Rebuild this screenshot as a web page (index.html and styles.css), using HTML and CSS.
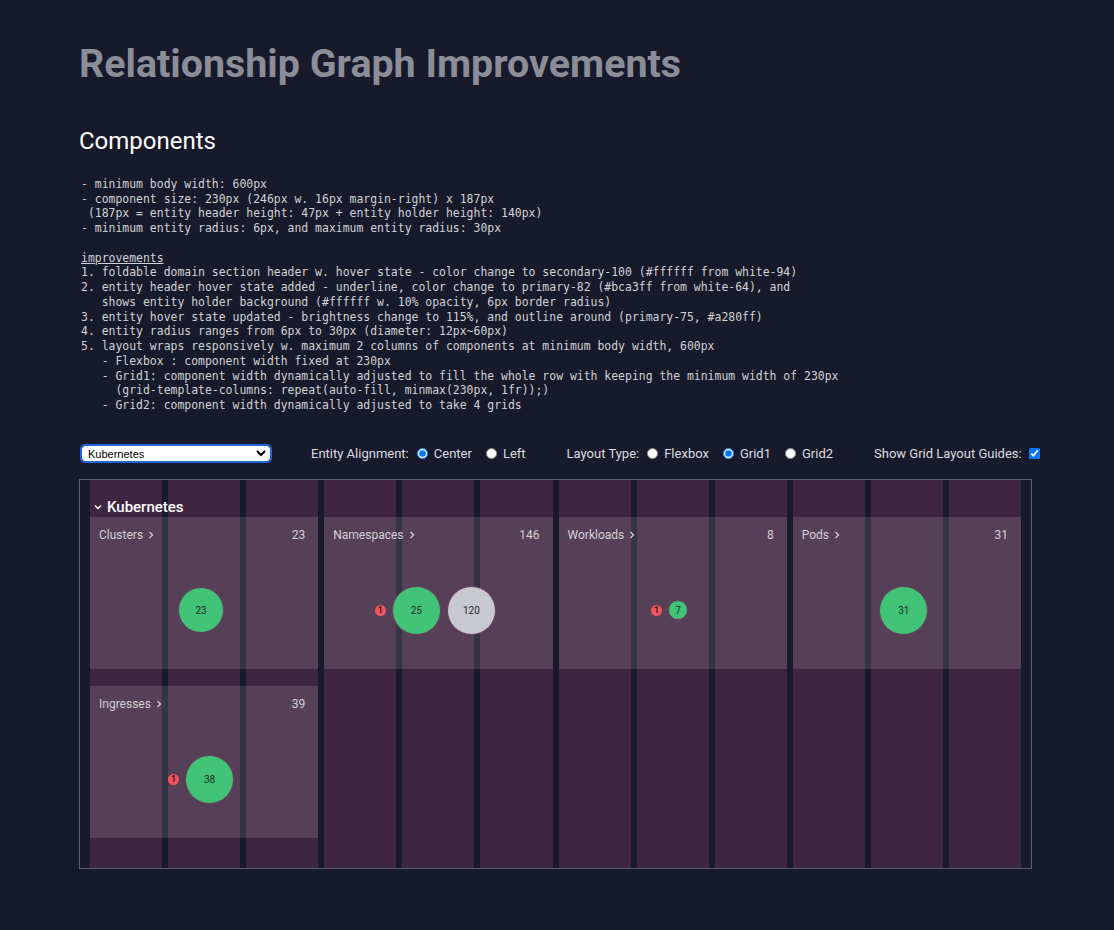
FILE: index.html
```html
<!DOCTYPE html>
<html lang="en">
<head>
<meta charset="utf-8">
<title>Relationship Graph Improvements</title>
<link rel="stylesheet" href="styles.css">
</head>
<body>
<h1 class="title">Relationship Graph Improvements</h1>
<h2 class="subtitle">Components</h2>
<pre class="notes">- minimum body width: 600px
- component size: 230px (246px w. 16px margin-right) x 187px
 (187px = entity header height: 47px + entity holder height: 140px)
- minimum entity radius: 6px, and maximum entity radius: 30px

<u>improvements</u>
1. foldable domain section header w. hover state - color change to secondary-100 (#ffffff from white-94)
2. entity header hover state added - underline, color change to primary-82 (#bca3ff from white-64), and
   shows entity holder background (#ffffff w. 10% opacity, 6px border radius)
3. entity hover state updated - brightness change to 115%, and outline around (primary-75, #a280ff)
4. entity radius ranges from 6px to 30px (diameter: 12px~60px)
5. layout wraps responsively w. maximum 2 columns of components at minimum body width, 600px
   - Flexbox : component width fixed at 230px
   - Grid1: component width dynamically adjusted to fill the whole row with keeping the minimum width of 230px
     (grid-template-columns: repeat(auto-fill, minmax(230px, 1fr));)
   - Grid2: component width dynamically adjusted to take 4 grids</pre>

<div class="controls">
  <select class="domain-select"><option>Kubernetes</option></select>
  <div class="ctrl">
    <span class="ctrl-label">Entity Alignment:</span>
    <label class="opt"><input type="radio" name="align" checked>Center</label>
    <label class="opt"><input type="radio" name="align">Left</label>
  </div>
  <div class="ctrl">
    <span class="ctrl-label">Layout Type:</span>
    <label class="opt"><input type="radio" name="layout">Flexbox</label>
    <label class="opt"><input type="radio" name="layout" checked>Grid1</label>
    <label class="opt"><input type="radio" name="layout">Grid2</label>
  </div>
  <div class="ctrl">
    <span class="ctrl-label">Show Grid Layout Guides:</span>
    <input class="check" type="checkbox" checked>
  </div>
</div>

<div class="graph">
  <div class="guides">
    <div class="guide"></div><div class="guide"></div><div class="guide"></div><div class="guide"></div>
    <div class="guide"></div><div class="guide"></div><div class="guide"></div><div class="guide"></div>
    <div class="guide"></div><div class="guide"></div><div class="guide"></div><div class="guide"></div>
  </div>
  <div class="domain">
    <div class="domain-header">
      <svg class="fold" width="8" height="6" viewBox="0 0 8 6"><path d="M1 1.5 L4 4.5 L7 1.5" fill="none" stroke="#ffffff" stroke-width="1.4"/></svg>
      <span>Kubernetes</span>
    </div>
    <div class="components">
      <div class="component">
        <div class="comp-header">
          <span class="comp-name">Clusters <svg class="chev" width="6" height="8" viewBox="0 0 6 8"><path d="M1.5 1 L4.5 4 L1.5 7" fill="none" stroke="#d7cfd8" stroke-width="1.3"/></svg></span>
          <span class="comp-count">23</span>
        </div>
        <div class="holder">
          <div class="entity"><div class="circle green" style="width:46px;height:46px">23</div></div>
        </div>
      </div>
      <div class="component">
        <div class="comp-header">
          <span class="comp-name">Namespaces <svg class="chev" width="6" height="8" viewBox="0 0 6 8"><path d="M1.5 1 L4.5 4 L1.5 7" fill="none" stroke="#d7cfd8" stroke-width="1.3"/></svg></span>
          <span class="comp-count">146</span>
        </div>
        <div class="holder">
          <div class="entity"><span class="badge">1</span><div class="circle green" style="width:49px;height:49px">25</div></div>
          <div class="entity"><div class="circle grey" style="width:49px;height:49px">120</div></div>
        </div>
      </div>
      <div class="component">
        <div class="comp-header">
          <span class="comp-name">Workloads <svg class="chev" width="6" height="8" viewBox="0 0 6 8"><path d="M1.5 1 L4.5 4 L1.5 7" fill="none" stroke="#d7cfd8" stroke-width="1.3"/></svg></span>
          <span class="comp-count">8</span>
        </div>
        <div class="holder">
          <div class="entity"><span class="badge">1</span><div class="circle green" style="width:20px;height:20px">7</div></div>
        </div>
      </div>
      <div class="component">
        <div class="comp-header">
          <span class="comp-name">Pods <svg class="chev" width="6" height="8" viewBox="0 0 6 8"><path d="M1.5 1 L4.5 4 L1.5 7" fill="none" stroke="#d7cfd8" stroke-width="1.3"/></svg></span>
          <span class="comp-count">31</span>
        </div>
        <div class="holder">
          <div class="entity"><div class="circle green" style="width:49px;height:49px">31</div></div>
        </div>
      </div>
      <div class="component">
        <div class="comp-header">
          <span class="comp-name">Ingresses <svg class="chev" width="6" height="8" viewBox="0 0 6 8"><path d="M1.5 1 L4.5 4 L1.5 7" fill="none" stroke="#d7cfd8" stroke-width="1.3"/></svg></span>
          <span class="comp-count">39</span>
        </div>
        <div class="holder">
          <div class="entity"><span class="badge">1</span><div class="circle green" style="width:49px;height:49px">38</div></div>
        </div>
      </div>
    </div>
  </div>
</div>
</body>
</html>
```

FILE: styles.css
```css
html, body {
  margin: 0;
  background: #171a2b;
}
body {
  padding: 0 82px 0 79px;
  font-family: Roboto, "Liberation Sans", sans-serif;
  color: #dcdde1;
}
.title {
  margin: 41px 0 0 0;
  font-family: Roboto, sans-serif;
  font-weight: 700;
  font-size: 39.4px;
  line-height: 45px;
  color: #8b8e98;
  letter-spacing: 0;
}
.subtitle {
  margin: 41px 0 0 0;
  font-family: Roboto, sans-serif;
  font-weight: 400;
  font-size: 24px;
  line-height: 28px;
  color: #ffffff;
}
.notes {
  margin: 22px 0 0 2px;
  font-family: "DejaVu Sans Mono", "Liberation Mono", monospace;
  font-size: 11.45px;
  line-height: 14.73px;
  color: #d2d3d8;
}
.controls {
  margin-top: 32px;
  display: flex;
  align-items: center;
  gap: 41px;
  height: 18px;
  white-space: nowrap;
}
.domain-select {
  flex-shrink: 0;
  width: 188px;
  height: 15px;
  margin-left: 3px;
  font-family: "Liberation Sans", Arial, sans-serif;
  font-size: 11px;
  color: #000;
  background: #ffffff;
  border: 1px solid #ffffff;
  border-radius: 3px;
  outline: 2px solid #2466d9;
  outline-offset: 0;
  padding: 0 1px;
}
.ctrl {
  flex-shrink: 0;
  display: flex;
  align-items: center;
  font-size: 13px;
  color: #dcdde1;
}
.opt {
  display: flex;
  align-items: center;
  margin-left: 8px;
}
.opt + .opt {
  margin-left: 14px;
}
.opt input {
  width: 11px;
  height: 11px;
  margin: 0 6px 0 0;
}
.check {
  width: 11px;
  height: 11px;
  margin: 0 0 0 7px;
}
.graph {
  position: relative;
  margin-top: 16px;
  border: 1px solid #5d6070;
  padding: 0 10px 30px 10px;
}
.guides {
  position: absolute;
  top: 0;
  bottom: 0;
  left: 10px;
  right: 10px;
  display: grid;
  grid-template-columns: repeat(12, 1fr);
  column-gap: 6px;
}
.guide {
  background: #3f2640;
}
.domain {
  position: relative;
}
.domain-header {
  display: flex;
  align-items: center;
  height: 20px;
  padding: 17px 0 0 4px;
  font-size: 15px;
  font-weight: 500;
  color: #ffffff;
}
.fold {
  margin-right: 5px;
}
.components {
  display: grid;
  grid-template-columns: repeat(4, 1fr);
  column-gap: 6px;
  row-gap: 17px;
}
.component {
  height: 152px;
  background: rgba(255, 255, 255, 0.12);
  display: flex;
  flex-direction: column;
}
.comp-header {
  height: 37px;
  display: flex;
  justify-content: space-between;
  align-items: center;
  padding: 0 13px 0 9px;
  font-size: 12px;
  color: #d7cfd8;
}
.comp-name {
  display: flex;
  align-items: center;
}
.chev {
  margin-left: 5px;
}
.holder {
  flex: 1;
  display: flex;
  justify-content: center;
  align-items: center;
  padding-bottom: 2px;
}
.entity {
  display: flex;
  align-items: center;
  margin-right: 6px;
}
.badge {
  width: 11px;
  height: 11px;
  border-radius: 50%;
  background: #ef5560;
  color: #2a0d10;
  font-size: 9px;
  font-weight: 500;
  line-height: 11px;
  text-align: center;
  margin-right: 6px;
}
.circle {
  border-radius: 50%;
  display: flex;
  align-items: center;
  justify-content: center;
  box-sizing: border-box;
  border: 1px solid #6a3a5e;
  font-size: 10px;
  color: #1c2a22;
}
.green {
  background: #41c477;
}
.grey {
  background: #c7c8d1;
  color: #2a2b33;
}
```
